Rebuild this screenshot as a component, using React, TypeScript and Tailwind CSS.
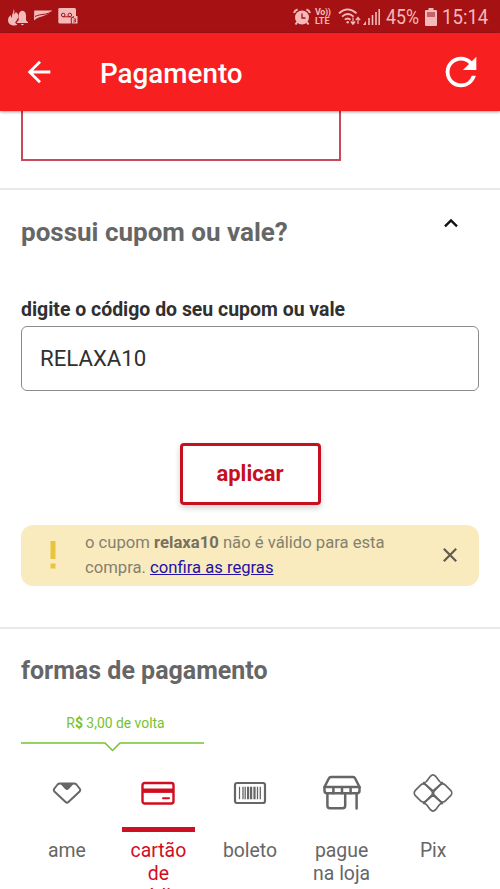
import { useState } from 'react'
import type { ReactNode } from 'react'
import { MdArrowBack, MdRefresh } from 'react-icons/md'

type Method = { id: string; label: string; icon: ReactNode }

const METHODS: Method[] = [
  { id: 'ame', label: 'ame', icon: <AmeIcon /> },
  { id: 'card', label: 'cartão de crédito', icon: <CardIcon /> },
  { id: 'boleto', label: 'boleto', icon: <BarcodeIcon /> },
  { id: 'store', label: 'pague na loja', icon: <StoreIcon /> },
  { id: 'pix', label: 'Pix', icon: <PixIcon /> },
]

function AmeIcon() {
  return (
    <svg width="30" height="24" viewBox="0 0 30 24" fill="none" stroke="currentColor" strokeWidth="2" strokeLinejoin="round">
      <path d="M8 2.5h14q1.5 0 2.4 1l3.2 4q1.2 1.5 0 2.9L16.4 21q-1.4 1.3-2.8 0L2.4 10.4q-1.2-1.4 0-2.9l3.2-4q.9-1 2.4-1z" />
      <path d="M8.5 3h13l-4.8 5.3q-1.7 1.5-3.4 0z" fill="currentColor" stroke="none" />
    </svg>
  )
}

function CardIcon() {
  return (
    <svg width="34" height="24" viewBox="0 0 34 24" fill="none" stroke="currentColor" strokeWidth="2.4">
      <rect x="1.5" y="2" width="31" height="20.5" rx="2.2" />
      <path d="M1 9.7h32" strokeWidth="4.4" />
      <path d="M22 17.2h6" strokeWidth="2" strokeLinecap="round" />
    </svg>
  )
}

function BarcodeIcon() {
  return (
    <svg width="34" height="24" viewBox="0 0 34 24" fill="none" stroke="currentColor">
      <rect x="2" y="2" width="30" height="20" rx="2" strokeWidth="2.2" />
      <path d="M6.5 5.8v12.4" strokeWidth="1.2" />
      <path d="M10 5.8v12.4M12.2 5.8v12.4M24.5 5.8v12.4M27.3 5.8v12.4" strokeWidth="1.3" />
      <path d="M15.1 5.8v12.4M18.1 5.8v12.4M21.5 5.8v12.4" strokeWidth="2.2" />
    </svg>
  )
}

function StoreIcon() {
  return (
    <svg width="38" height="36" viewBox="0 0 38 36" fill="none" stroke="currentColor" strokeWidth="2.5" strokeLinejoin="round" strokeLinecap="round">
      <path d="M5.8 3.5Q6.5 2 8 2h22q1.5 0 2.2 1.5L36.5 12v3.7q0 2.5-2.5 2.5H4q-2.5 0-2.5-2.5V12z" />
      <path d="M1.5 12h35M10.4 12v6.2M19 12v6.2M27.6 12v6.2" />
      <path d="M4.4 18.2v12.6q0 2.4 2.4 2.4h13q2.4 0 2.4-2.4V18.2M33.6 18.2v15.3" />
    </svg>
  )
}

function PixIcon() {
  return (
    <svg width="40" height="40" viewBox="0 0 40 40" fill="none" stroke="currentColor" strokeWidth="1.7" strokeLinejoin="round">
      <path d="M10.6 9.6q1.7 0 2.8-1.1l4-5.2q2.6-2.8 5.2 0l4 5.2q1.1 1.1 2.8 1.1L20 17.8z" />
      <path d="M10.6 30.4q1.7 0 2.8 1.1l4 5.2q2.6 2.8 5.2 0l4-5.2q1.1-1.1 2.8-1.1L20 22.2z" />
      <rect x="2.8" y="12.5" width="15" height="15" rx="3.8" transform="rotate(45 10.3 20)" />
      <rect x="22.2" y="12.5" width="15" height="15" rx="3.8" transform="rotate(45 29.7 20)" />
    </svg>
  )
}

function StatusBar() {
  return (
    <div className="flex h-[33px] items-center bg-[#a61214] pl-2 pr-3 text-[#f4b9b9]">
      <svg width="72" height="20" viewBox="0 0 72 20" fill="currentColor">
        <path d="M5.5 2c1.5 2 1 3.5.2 5 .9 0 1.6-.9 2.2-2 2.5 2 3 3.800 2.500 5.500-1.500 1.500-1.500 3.500-3.400 5l2.500 2.500C3.800 19.500 0 17 0 13.200 0 11 1.200 9.500 2.600 8c.2 1.700.7 2.300 1.500 2.800C3.500 7.500 5.900 5.500 5.500 2z" />
        <path d="M14.300 3.800c3 .4 3.700 2.600 3.700 5.200v4.200l2 2v.9H8.800v-.9l1.900-2V9c0-2.600.9-4.800 3.600-5.200zM12.800 17h3.200q-1.600 2.400-3.200 0z" />
        <path d="M26.200 3.500h18C39 10 32 8 26 13.500z" />
        <path d="M27 9.500c6-3 10-1 16-4.500" fill="none" stroke="#a61214" strokeWidth="1" />
        <path d="M51.500 1h15q1.500 0 1.500 1.500V9h1.500v7.600H52q-1.700 0-1.700-1.600V2.400Q50.300 1 51.500 1z" />
        <g fill="none" stroke="#a61214" strokeWidth="1">
          <circle cx="55.2" cy="8" r="1.8" />
          <circle cx="61.8" cy="8" r="1.8" />
          <path d="M55.2 9.8h6.6" />
          <path d="M63.3 17v-6.500h2V9" />
          <path d="M65.5 11.800h2v1.500h-2M67.500 13.300v1.700h-2.300" strokeWidth=".8" />
        </g>
      </svg>
      <div className="ml-auto flex items-center">
        <svg width="18" height="18" viewBox="0 0 18 18" fill="none" stroke="currentColor" strokeWidth="2">
          <circle cx="9" cy="9.5" r="7" fill="currentColor" stroke="none" />
          <path d="M1 5q.7-2.600 3.600-3.500M17 5q-.7-2.600-3.600-3.500M4.200 14l-1.700 2.500M13.800 14l1.700 2.500" />
          <path d="M9 5.500V10h3.500" stroke="#a61214" strokeWidth="1.3" />
        </svg>
        <div className="ml-1 flex w-[18px] flex-col text-[9px] font-bold leading-[9px]">
          <span className="whitespace-nowrap tracking-[-0.4px]">Vo))</span>
          <span>LTE</span>
        </div>
        <svg className="ml-[5px]" width="24" height="18" viewBox="0 0 24 18" fill="none" stroke="currentColor" strokeWidth="1.8">
          <path d="M1 5.300q8.500-7.800 17.500 0M4 8.700q5.800-5.300 11.600 0M6.800 11.700q2.800-2.500 5.700 0" />
          <circle cx="9.7" cy="14.3" r="1.2" fill="currentColor" stroke="none" />
          <path d="M15 9.500V16M12.800 13.500l2.200 2.700 2.200-2.700M20 16V9.500M17.800 12.200L20 9.500l2.200 2.700" strokeWidth="1.2" />
        </svg>
        <svg width="19" height="18" viewBox="0 0 19 18" fill="none" stroke="currentColor" strokeWidth="1.6">
          <path d="M4 13v4H1z" fill="currentColor" stroke="none" />
          <path d="M7 10v7M10.5 7v10M14 4v13M17.2 1v16" />
        </svg>
        <span className="ml-[5px] w-[34px] origin-left scale-x-[.89] whitespace-nowrap text-[20px] leading-none">45%</span>
        <svg className="ml-[5px]" width="12" height="18" viewBox="0 0 12 18" fill="currentColor">
          <path d="M3.5 0h5v2H11q1 0 1 1v14q0 1-1 1H1q-1 0-1-1V3q0-1 1-1h2.5z" />
          <path d="M2 4h8v5H2z" fill="#c76365" />
        </svg>
        <span className="ml-[5px] w-[46px] origin-left scale-x-[.93] whitespace-nowrap text-[20px] leading-none">15:14</span>
      </div>
    </div>
  )
}

function Header() {
  return (
    <header className="relative z-10 flex h-[78px] items-center bg-[#f71f1f] pb-px pl-[22px] pr-4 text-white shadow-[0_1px_3px_rgba(0,0,0,0.4)]">
      <button aria-label="voltar">
        <MdArrowBack size={34} />
      </button>
      <h1 className="ml-11 pt-1 text-[27.8px] font-medium leading-none">Pagamento</h1>
      <button aria-label="atualizar" className="ml-auto">
        <MdRefresh size={46} />
      </button>
    </header>
  )
}

function Coupon() {
  const [code, setCode] = useState('RELAXA10')
  const [notice, setNotice] = useState(true)

  return (
    <section className="h-[439px] border-t-2 border-[#e9e9e9] px-[21px]">
      <div className="flex justify-between pr-5 pt-6">
        <h2 className="text-[26px] font-bold leading-9 text-[#666]">possui cupom ou vale?</h2>
        <svg className="mt-px" width="16" height="16" viewBox="0 0 16 16" fill="none" stroke="#111" strokeWidth="2.4">
          <path d="M2 11.3L8 5.5l6 5.8" />
        </svg>
      </div>
      <label htmlFor="coupon" className="mt-12 block text-[19.45px] font-bold leading-6 text-[#303030]">
        digite o código do seu cupom ou vale
      </label>
      <input
        id="coupon"
        value={code}
        onChange={e => setCode(e.target.value)}
        className="mt-1 block h-[65px] w-full rounded-[6px] border border-[#8c8c8c] px-[18px] pb-px text-[22.2px] text-[#303030] outline-none"
      />
      <button className="mx-auto mt-[52px] block h-[62px] w-[141px] rounded-[4px] border-[3px] border-[#c6101f] pb-px text-[22px] font-bold text-[#c6101f] shadow-[0_3px_6px_rgba(0,0,0,0.18)]">
        aplicar
      </button>
      {notice && (
        <div className="mt-5 flex h-[61px] items-center rounded-[12px] bg-[#faebbf] pb-px pl-[29px] pr-[21px]">
          <svg width="6" height="28" viewBox="0 0 6 28" fill="#e8c53a">
            <path d="M.5 0h5v18h-5zM.5 22.5h5v5h-5z" />
          </svg>
          <p className="ml-[29px] text-[16.65px] leading-[25px] text-[#84816f]">
            o cupom <b className="text-[#77705d]">relaxa10</b> não é válido para esta
            <br />
            compra. <a href="#" className="text-[#2412a8] underline">confira as regras</a>
          </p>
          <button aria-label="fechar" className="ml-auto" onClick={() => setNotice(false)}>
            <svg width="16" height="16" viewBox="0 0 16 16" stroke="#5f5c50" strokeWidth="2.2">
              <path d="M1.8 1.8l12.4 12.4M14.2 1.8L1.8 14.2" />
            </svg>
          </button>
        </div>
      )}
    </section>
  )
}

function PaymentMethods() {
  const [selected, setSelected] = useState('card')

  return (
    <section className="border-t-2 border-[#e9e9e9] px-[21px] pt-6">
      <h2 className="text-[25px] font-bold leading-9 text-[#666]">formas de pagamento</h2>
      <div className="mt-6 w-[183px] text-[#76c232]">
        <p className="pl-1.5 text-center text-[13.9px] leading-5">
          R<b>$</b> 3,00 de volta
        </p>
        <svg className="mt-2" width="183" height="12" viewBox="0 0 183 12" fill="none" stroke="currentColor" strokeWidth="1.5">
          <path d="M0 2h84l7.5 7.5L99 2h84" />
        </svg>
      </div>
      <div className="mt-4 grid grid-cols-5">
        {METHODS.map(m => (
          <button
            key={m.id}
            onClick={() => setSelected(m.id)}
            className={`flex flex-col items-center ${selected === m.id ? 'text-[#d20d20]' : 'text-[#666]'}`}
          >
            <span className="flex h-12 items-center">{m.icon}</span>
            <span className={`mt-2.5 h-[5px] w-[73px] ${selected === m.id ? 'bg-[#cd1022]' : ''}`} />
            <span className="mt-[7px] w-[73px] text-[19.4px] leading-[23px]">{m.label}</span>
          </button>
        ))}
      </div>
    </section>
  )
}

export default function App() {
  return (
    <div className="h-[889px] w-[500px] overflow-hidden bg-white font-['Roboto',sans-serif]">
      <StatusBar />
      <Header />
      <div className="h-[77px] px-[21px]">
        <div className="h-[50px] w-[320px] border-2 border-t-0 border-[#c8485c]" />
      </div>
      <Coupon />
      <PaymentMethods />
    </div>
  )
}
